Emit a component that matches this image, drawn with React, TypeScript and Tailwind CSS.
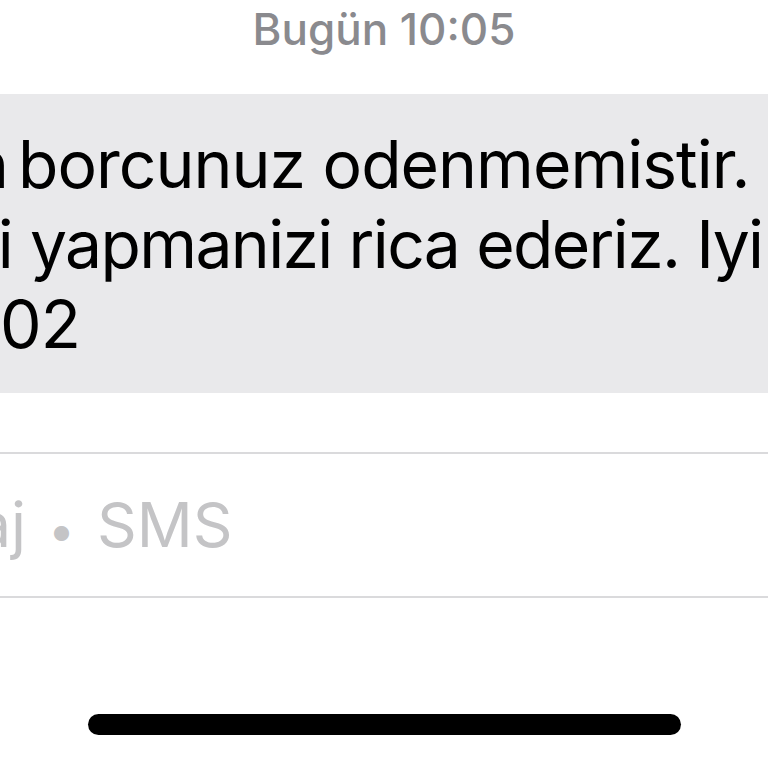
import React from 'react'

// Cropped view of an SMS thread: timestamp, incoming bubble, composer, home bar
const prefix = 'flex shrink-0 justify-end overflow-hidden whitespace-nowrap'

export default function App() {
  return (
    <div className="h-[768px] w-[768px] overflow-hidden bg-white font-[family-name:Inter,'Noto_Sans',sans-serif]">
      <div className="pt-[3px] text-center text-[44px] leading-[52px] font-medium text-[#8a8a8e]">
        Bugün 10:05
      </div>

      <div className="mt-[39px] bg-[#e9e9eb] pt-[30px] pb-[29px] text-[66px] leading-[80px] tracking-[-0.015em] text-black">
        <div className="flex whitespace-nowrap">
          <span className={`${prefix} w-[8px]`}>tutarin</span>
          <span className="ml-[10px]">borcunuz odenmemistir.</span>
        </div>
        <div className="flex whitespace-nowrap tracking-[-0.025em]">
          <span className={`${prefix} w-[12px]`}>Odemenizi</span>
          <span className="ml-[18px]">yapmanizi rica ederiz. Iyi gunler.</span>
        </div>
        <div className="flex whitespace-nowrap">
          <span className={`${prefix} w-[80px]`}>44402</span>
        </div>
      </div>

      <div className="mt-[59px] box-border h-[146px] border-y-2 border-[#dadadc] pt-[33px] text-[62px] leading-[75px] text-[#c4c4c6]">
        <div className="flex items-baseline whitespace-nowrap">
          <span className={`${prefix} w-[26px]`}>Kısa Mesaj</span>
          <span className="ml-[22px] text-[48px]">•</span>
          <span className="ml-[22px]">SMS</span>
        </div>
      </div>

      <div className="mx-auto mt-[116px] h-[21px] w-[593px] rounded-full bg-black" />
    </div>
  )
}
